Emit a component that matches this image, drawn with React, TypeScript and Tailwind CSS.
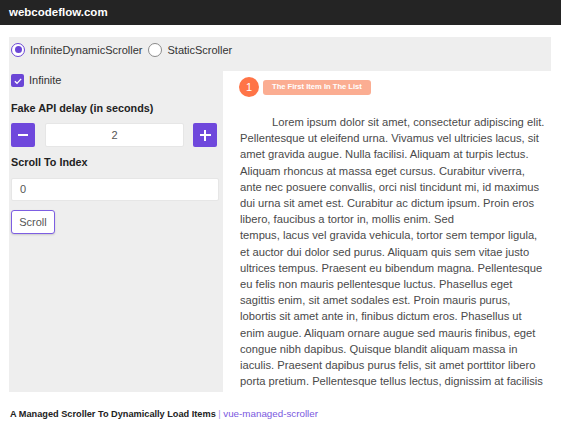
import { useState } from 'react';

const lines = [
  'Pellentesque ut eleifend urna. Vivamus vel ultricies lacus, sit',
  'amet gravida augue. Nulla facilisi. Aliquam at turpis lectus.',
  'Aliquam rhoncus at massa eget cursus. Curabitur viverra,',
  'ante nec posuere convallis, orci nisl tincidunt mi, id maximus',
  'dui urna sit amet est. Curabitur ac dictum ipsum. Proin eros',
  'libero, faucibus a tortor in, mollis enim. Sed',
  'tempus, lacus vel gravida vehicula, tortor sem tempor ligula,',
  'et auctor dui dolor sed purus. Aliquam quis sem vitae justo',
  'ultrices tempus. Praesent eu bibendum magna. Pellentesque',
  'eu felis non mauris pellentesque luctus. Phasellus eget',
  'sagittis enim, sit amet sodales est. Proin mauris purus,',
  'lobortis sit amet ante in, finibus dictum eros. Phasellus ut',
  'enim augue. Aliquam ornare augue sed mauris finibus, eget',
  'congue nibh dapibus. Quisque blandit aliquam massa in',
  'iaculis. Praesent dapibus purus felis, sit amet porttitor libero',
  'porta pretium. Pellentesque tellus lectus, dignissim at facilisis',
];

function Radio({ checked, label, onClick }: { checked: boolean; label: string; onClick: () => void }) {
  return (
    <button type="button" onClick={onClick} className="flex items-center gap-[5px]">
      <span
        className={
          checked
            ? 'flex h-[14px] w-[14px] items-center justify-center rounded-full border-[1.5px] border-[#6b46d6] bg-white'
            : 'flex h-[14px] w-[14px] items-center justify-center rounded-full border border-[#8a8a8a] bg-white'
        }
      >
        {checked && <span className="h-[7px] w-[7px] rounded-full bg-[#6b46d6]" />}
      </span>
      <span className="text-[11px] leading-[14px] text-[#333]">{label}</span>
    </button>
  );
}

export default function App() {
  const [mode, setMode] = useState<'infinite' | 'static'>('infinite');
  const [delay, setDelay] = useState(2);

  return (
    <div className="min-h-[431px] bg-white font-['Liberation_Sans',Arial,sans-serif]">
      <header className="flex h-[25px] items-center bg-[#242424] px-[9px]">
        <span className="text-[11.5px] font-bold text-white">webcodeflow.com</span>
      </header>

      <main className="mx-[9px] mt-[12px] h-[355px] w-[542px] overflow-hidden bg-[#eeeeee]">
        <div className="flex h-[24px] items-center gap-[6px] pl-[2px] pt-[1px]">
          <Radio checked={mode === 'infinite'} label="InfiniteDynamicScroller" onClick={() => setMode('infinite')} />
          <Radio checked={mode === 'static'} label="StaticScroller" onClick={() => setMode('static')} />
        </div>

        <div className="mt-[10px] flex">
          {/* controls */}
          <div className="w-[214px] shrink-0 pl-[2px] pt-[3px]">
            <label className="flex items-center gap-[5px]">
              <span className="flex h-[13px] w-[13px] items-center justify-center rounded-[2px] bg-[#6b46d6]">
                <svg viewBox="0 0 12 12" className="h-[10px] w-[10px]" fill="none" stroke="white" strokeWidth="1.6">
                  <path d="M2.2 6.3 4.8 8.8 9.8 3.4" />
                </svg>
              </span>
              <span className="text-[11px] leading-[13px] text-[#333]">Infinite</span>
            </label>

            <div className="mt-[15px] text-[10.8px] font-bold leading-[13px] text-[#222]">Fake API delay (in seconds)</div>
            <div className="mt-[8px] flex h-[24px] items-center">
              <button
                type="button"
                onClick={() => setDelay(delay - 1)}
                className="flex h-[24px] w-[24px] items-center justify-center rounded-[2px] bg-[#6f48dc]"
              >
                <span className="h-[2px] w-[10px] bg-white" />
              </button>
              <div className="ml-[10px] flex h-[24px] w-[139px] items-center justify-center rounded-[2px] border border-[#e6e6e6] bg-white text-[11px] text-[#555]">
                {delay}
              </div>
              <button
                type="button"
                onClick={() => setDelay(delay + 1)}
                className="relative ml-[9px] flex h-[24px] w-[24px] items-center justify-center rounded-[2px] bg-[#6f48dc]"
              >
                <span className="h-[2px] w-[11px] bg-white" />
                <span className="absolute h-[11px] w-[2px] bg-white" />
              </button>
            </div>

            <div className="mt-[9px] text-[10.8px] font-bold leading-[13px] text-[#222]">Scroll To Index</div>
            <div className="mt-[9px] flex h-[23px] w-[208px] items-center rounded-[2px] border border-[#e6e6e6] bg-white px-[8px] text-[11px] text-[#555]">
              0
            </div>
            <button
              type="button"
              className="mt-[9px] flex h-[24px] w-[44px] items-center justify-center rounded-[3px] border border-[#7d5ee2] bg-white text-[11px] text-[#555] shadow-[0_1px_2px_rgba(0,0,0,0.15)]"
            >
              Scroll
            </button>
          </div>

          {/* list */}
          <div className="h-[321px] flex-1 overflow-hidden bg-white pl-[16px] pt-[6px]">
            <div className="flex items-center gap-[4px]">
              <span className="flex h-[20px] w-[20px] items-center justify-center rounded-full bg-[#ff7447] text-[11px] text-white">
                1
              </span>
              <span className="flex h-[15px] items-center rounded-[3px] bg-[#fbad92] px-[9px] text-[7.6px] font-bold text-white">
                The First Item In The List
              </span>
            </div>
            <p className="mt-[17px] pl-[1px] text-[11.2px] leading-[16.2px] whitespace-nowrap text-[#4a4a4a]">
              <span className="pl-[32px]">Lorem ipsum dolor sit amet, consectetur adipiscing elit.</span>
              {lines.map((line) => (
                <span key={line}>
                  <br />
                  {line}
                </span>
              ))}
            </p>
          </div>
        </div>
      </main>

      <footer className="mt-[16px] px-[10px] text-[9.2px] leading-[11px]">
        <span className="font-bold text-[#222]">A Managed Scroller To Dynamically Load Items</span>
        <span className="text-[#a58ff0]"> | </span>
        <span className="text-[9.8px] text-[#7a58e0]">vue-managed-scroller</span>
      </footer>
    </div>
  );
}
